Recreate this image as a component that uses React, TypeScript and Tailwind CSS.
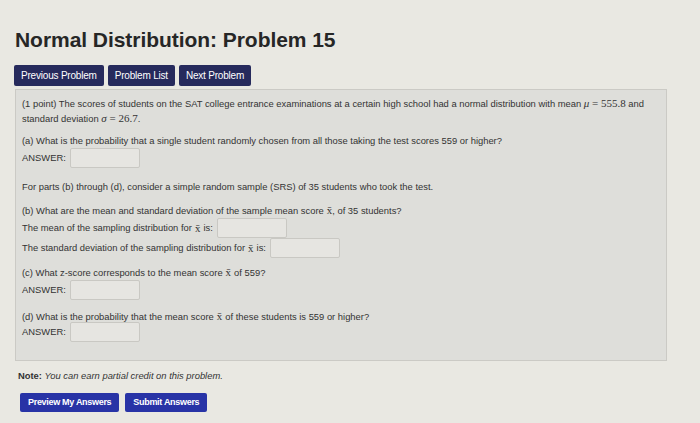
import React from 'react';

const sans = { fontFamily: '"Liberation Sans", Arial, sans-serif' };

function Xbar({ tight = false }: { tight?: boolean }) {
  return <span className={`font-['Liberation_Serif',serif] text-[11px] leading-[10px] ml-[3px] ${tight ? '' : 'mr-[3px]'}`}>x̄</span>;
}

function AnswerBox() {
  return <span className="inline-block w-[70px] h-[20px] bg-[#e6e5e1] border border-[#c9c8c3] rounded-[2px] ml-[4px]" />;
}

function Row({ children }: { children: React.ReactNode }) {
  return <div className="flex items-center h-[20px] whitespace-pre">{children}</div>;
}

export default function App() {
  return (
    <div className="w-[700px] h-[423px] overflow-hidden bg-[#e9e8e2] text-[#333333]" style={sans}>
      <div className="pl-[15px] pt-[27px]">
        <h1 className="text-[21px] font-bold leading-[26px] text-[#262626] tracking-[-0.05px]">Normal Distribution: Problem 15</h1>
        <div className="flex gap-[4px] mt-[12px] -ml-[1px]">
          <button className="h-[21px] px-[7px] bg-[#262a5c] text-white text-[10px] rounded-[2px] tracking-[-0.2px]">Previous Problem</button>
          <button className="h-[21px] px-[7px] bg-[#262a5c] text-white text-[10px] rounded-[2px] tracking-[-0.2px]">Problem List</button>
          <button className="h-[21px] px-[7px] bg-[#262a5c] text-white text-[10px] rounded-[2px] tracking-[-0.2px]">Next Problem</button>
        </div>
        <div className="mt-[3px] w-[652px] bg-[#dededa] border border-[#cbcac5] pl-[6px] pr-[8px] pt-[6px] pb-[18px] text-[9.4px] leading-[14px]">
          <p className="leading-[15px]">
            (1 point) The scores of students on the SAT college entrance examinations at a certain high school had a normal distribution with mean{' '}
            <span className="font-['Liberation_Serif',serif] text-[11px] italic">μ</span>{' '}
            <span className="font-['Liberation_Serif',serif] text-[11px]">= 555.8</span> and standard deviation{' '}
            <span className="font-['Liberation_Serif',serif] text-[11px]"><i>σ</i> = 26.7</span>.
          </p>
          <p className="mt-[8px]">(a) What is the probability that a single student randomly chosen from all those taking the test scores 559 or higher?</p>
          <Row>ANSWER:<AnswerBox /></Row>
          <p className="mt-[12px]">For parts (b) through (d), consider a simple random sample (SRS) of 35 students who took the test.</p>
          <p className="mt-[10px]">(b) What are the mean and standard deviation of the sample mean score<Xbar tight />, of 35 students?</p>
          <Row>The mean of the sampling distribution for<Xbar />is:<AnswerBox /></Row>
          <Row>The standard deviation of the sampling distribution for<Xbar />is:<AnswerBox /></Row>
          <p className="mt-[8px]">(c) What z-score corresponds to the mean score<Xbar />of 559?</p>
          <Row>ANSWER:<AnswerBox /></Row>
          <p className="mt-[10px]">(d) What is the probability that the mean score<Xbar />of these students is 559 or higher?</p>
          <div className="-mt-[2px]"><Row>ANSWER:<AnswerBox /></Row></div>
        </div>
        <p className="mt-[8px] ml-[3px] text-[9.4px] leading-[14px]">
          <span className="font-bold">Note:</span> <span className="italic">You can earn partial credit on this problem.</span>
        </p>
        <div className="flex gap-[6px] mt-[10px] ml-[5px]">
          <button className="h-[19px] px-[8px] bg-[#2833a6] text-white text-[9px] font-bold rounded-[2px] tracking-[-0.3px]">Preview My Answers</button>
          <button className="h-[19px] px-[8px] bg-[#2833a6] text-white text-[9px] font-bold rounded-[2px] tracking-[-0.3px]">Submit Answers</button>
        </div>
      </div>
    </div>
  );
}
